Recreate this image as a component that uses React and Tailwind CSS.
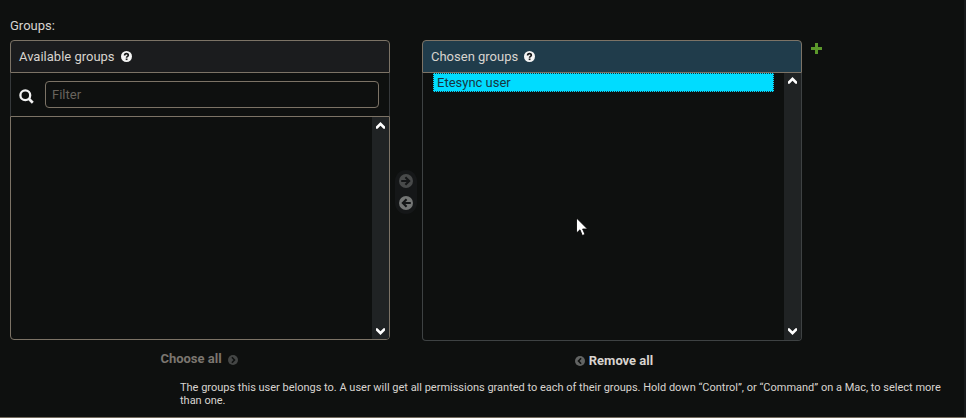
function Help() {
  return (
    <svg className="size-[11px] shrink-0" viewBox="0 0 11 11">
      <circle cx="5.5" cy="5.5" r="5.5" fill="#f5f5f5" />
      <path d="M3.6 4.4C3.6 2.1 7.3 2.1 7.3 4.2C7.3 5.4 5.6 5.3 5.6 6.7" fill="none" stroke="#181a1b" strokeWidth="1.7" />
      <rect x="4.7" y="7.5" width="1.8" height="1.6" fill="#181a1b" />
    </svg>
  );
}

function Chevron({ down }) {
  return (
    <svg className="h-[7px] w-[9px]" viewBox="0 0 9 7">
      <path
        d={down ? 'M0 0.2H1.5L4.5 3.2L7.5 0.2H9V2.6L4.5 7L0 2.6Z' : 'M0 6.8H1.5L4.5 3.8L7.5 6.8H9V4.4L4.5 0L0 4.4Z'}
        fill="#fff"
      />
    </svg>
  );
}

function Scrollbar({ padding }) {
  return (
    <div className={`flex w-[17px] flex-col items-center justify-between bg-[#202324] ${padding}`}>
      <Chevron />
      <Chevron down />
    </div>
  );
}

function ArrowCircle({ left, fill }) {
  return (
    <svg className="size-[14px]" viewBox="0 0 14 14">
      <circle cx="7" cy="7" r="7" fill={fill} />
      <g transform={left ? 'matrix(-1 0 0 1 14 0)' : undefined} fill="none" stroke="#141617" strokeWidth="2.1">
        <path d="M2.2 7H10M6.4 3.2L10.2 7L6.4 10.8" />
      </g>
    </svg>
  );
}

function ChevronCircle({ left, fill }) {
  return (
    <svg className="size-[10px]" viewBox="0 0 10 10">
      <circle cx="5" cy="5" r="5" fill={fill} />
      <path
        d={left ? 'M6.1 2.3L3.5 5L6.1 7.7' : 'M3.9 2.3L6.5 5L3.9 7.7'}
        fill="none"
        stroke="#0f1110"
        strokeWidth="1.6"
      />
    </svg>
  );
}

export default function App() {
  return (
    <div className="relative flex h-[418px] w-[966px] flex-col overflow-hidden border-b border-[#736b5e] bg-[#0e100f] pl-[10px] font-['Roboto',sans-serif] text-[13px] text-[#d8d4cf]">
      <div className="h-[40px] shrink-0 pt-[17px] leading-[17px]">Groups:</div>
      <div className="flex h-[334px] shrink-0">
        <section className="w-[380px]">
          <h2 className="flex h-[33px] items-center gap-[6px] rounded-t-[4px] border border-[#7c7366] bg-[#1b1c1e] pl-[8px]">
            Available groups <Help />
          </h2>
          <div className="flex h-[43px] items-center border-x border-[#36393b] pl-[8px]">
            <svg className="mt-[3px] size-[15px]" viewBox="0 0 15 15" fill="none" stroke="#f2f2f2">
              <circle cx="6.3" cy="6.3" r="4.9" strokeWidth="2.3" />
              <path d="M9.8 9.8L13.8 13.8" strokeWidth="2.7" />
            </svg>
            <div className="ml-[11px] h-[27px] w-[334px] rounded-[4px] border border-[#7c7366] pl-[6px] leading-[26px] text-[#68635c]">
              Filter
            </div>
          </div>
          <div className="flex h-[224px] justify-end overflow-hidden rounded-b-[4px] border border-[#7c7366]">
            <Scrollbar padding="pt-[5px] pb-[4px]" />
          </div>
          <div className="flex h-[38px] items-center justify-center gap-[6px] pr-[2px] font-bold text-[#7b766f]">
            Choose all
            <span className="mt-[1px]"><ChevronCircle fill="#444645" /></span>
          </div>
        </section>
        <div className="ml-[5px] mt-[130px] flex h-[44px] w-[22px] flex-col items-center justify-between rounded-full bg-[#151718] py-[4px]">
          <ArrowCircle fill="#484a4a" />
          <ArrowCircle left fill="#747675" />
        </div>
        <section className="ml-[5px] w-[380px]">
          <h2 className="flex h-[33px] items-center gap-[6px] rounded-t-[4px] border border-[#7c7366] bg-[#203c4b] pl-[8px]">
            Chosen groups <Help />
          </h2>
          <div className="flex h-[268px] justify-between overflow-hidden rounded-b-[4px] border border-t-0 border-[#3e4243] pl-[10px]">
            <div className="h-[19px] w-[341px] border border-dotted border-[#182d34] bg-[#00dcff] pl-[3px] leading-[18px] text-[#17363f]">
              Etesync user
            </div>
            <Scrollbar padding="pt-[4px] pb-[5px]" />
          </div>
          <div className="flex h-[40px] items-center justify-center gap-[4px] pl-[4px] font-bold">
            <span className="-mt-px"><ChevronCircle left fill="#626463" /></span>
            Remove all
          </div>
        </section>
        <svg className="ml-[9px] mt-[3px] size-[11px]" viewBox="0 0 11 11">
          <path d="M4 0H7V4H11V7H7V11H4V7H0V4H4Z" fill="#5b982b" />
        </svg>
      </div>
      <p className="ml-[170px] mt-[7px] w-[775px] text-[11px] leading-[13px] tracking-[-0.007px]">
        The groups this user belongs to. A user will get all permissions granted to each of their groups. Hold down “Control”, or “Command” on a Mac, to select more than one.
      </p>
      <div className="absolute right-0 top-0 h-full w-[2px] bg-[#181a1b]" />
      <svg className="absolute left-[576px] top-[217px] h-[20px] w-[13px]" viewBox="0 0 13 20">
        <path d="M0.5 1V16L4 12.8L6.3 18.5L9 17.4L6.6 12H11.5Z" fill="#fff" stroke="#000" strokeWidth="0.8" />
      </svg>
    </div>
  );
}
